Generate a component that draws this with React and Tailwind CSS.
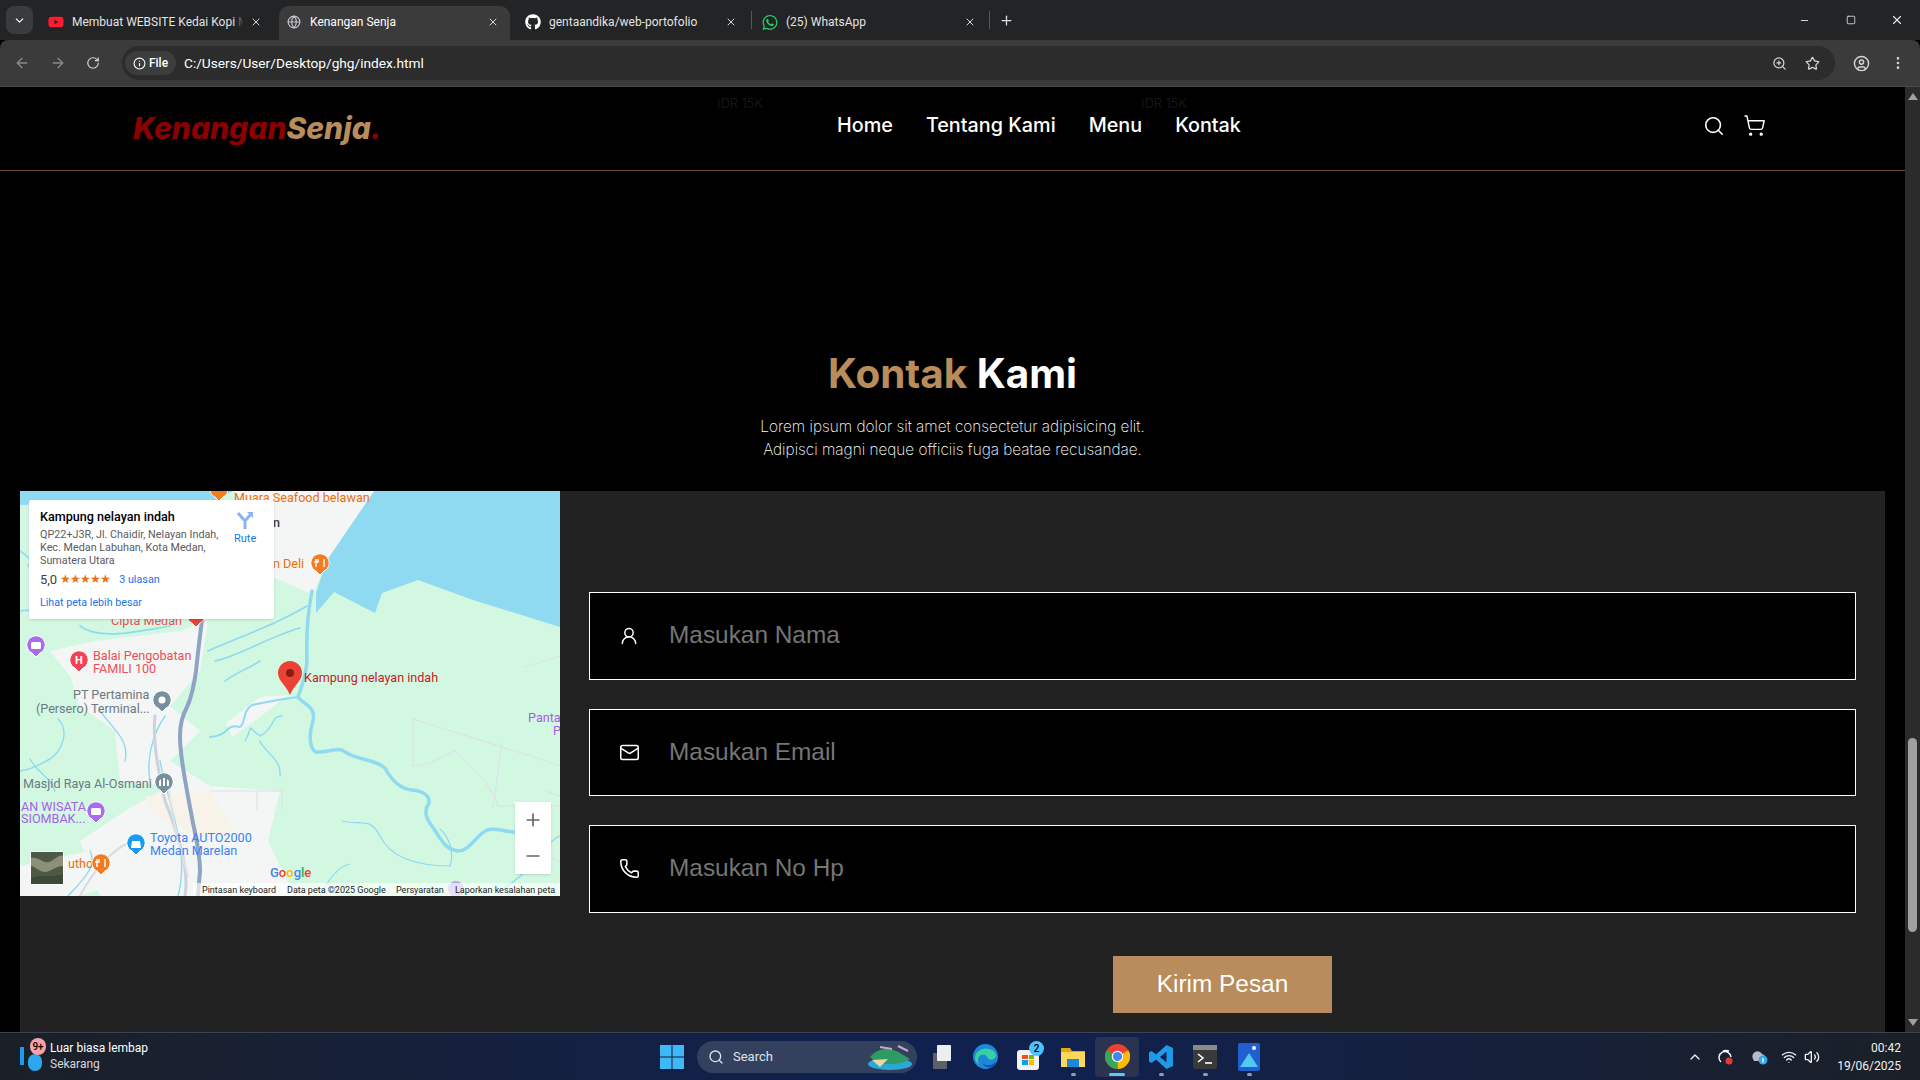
import { ChevronDown, X, ArrowLeft, ArrowRight, RotateCw, Info, ZoomIn, Star, CircleUser, EllipsisVertical, Plus, Minus, Search, ShoppingCart, UserRound, Mail, Phone, Globe, ChevronUp, Wifi, Volume2, Square } from 'lucide-react'
import { FaGithub, FaWhatsapp, FaYoutube } from 'react-icons/fa'

const ui = { fontFamily: 'Roboto, "Liberation Sans", sans-serif' }
const display = { fontFamily: 'Inter, "Liberation Sans", sans-serif' }
const arial = { fontFamily: '"Liberation Sans", sans-serif' }
const mapFont = 'Roboto, "Liberation Sans", sans-serif'

function Tab({ icon, title, width, active, padLeft, padRight }) {
  return (
    <div className={`flex items-center h-[34px] pb-[2px] shrink-0 gap-[8px] text-[12px] ${active ? 'bg-[#3b3b3b] rounded-t-[10px] text-white' : 'text-[#e3e3e3]'}`} style={{ width, paddingLeft: padLeft, paddingRight: padRight }}>
      <span className="w-4 h-4 flex items-center justify-center shrink-0">{icon}</span>
      <span className="flex-1 whitespace-nowrap overflow-hidden">{title}</span>
      <X size={12} className="text-[#d5d5d5] shrink-0" />
    </div>
  )
}

function BrowserChrome() {
  return (
    <div style={ui} className="shrink-0">
      <div className="h-[40px] bg-[#222425] flex items-end">
        <div className="flex items-center w-full h-[34px] pl-[6px]">
          <div className="w-[27px] h-[28px] rounded-lg bg-[#3a3b3c] flex items-center justify-center mb-[6px]">
            <ChevronDown size={13} className="text-white" />
          </div>
          <Tab width={246} padLeft={15} padRight={17} title={<>Membuat WEBSITE Kedai Kopi <span className="opacity-30">M</span></>} icon={<FaYoutube size={16} className="text-[#ff1a2f]" />} />
          <Tab width={231} padLeft={7} padRight={11} active title="Kenangan Senja" icon={<Globe size={14} className="text-[#c4c7cb]" />} />
          <Tab width={241} padLeft={15} padRight={14} title="gentaandika/web-portofolio" icon={<FaGithub size={16} className="text-white" />} />
          <div className="w-px h-[18px] bg-[#55585a] mb-[6px]" />
          <Tab width={237} padLeft={10} padRight={13} title="(25) WhatsApp" icon={<FaWhatsapp size={17} className="text-[#25d366]" />} />
          <div className="w-px h-[18px] bg-[#55585a] mb-[6px]" />
          <Plus size={15} className="text-[#e3e3e3] ml-[9px] mb-[6px]" />
          <div className="flex-1" />
          <div className="flex items-center mb-[6px] pr-[16px] text-[#e3e3e3]">
            <Minus size={11} />
            <Square size={10} className="ml-[36px]" />
            <X size={14} className="ml-[34px]" />
          </div>
        </div>
      </div>
      <div className="h-[47px] bg-[#3b3b3b] rounded-t-[8px] flex items-start pt-[6px] pl-[14px] border-b border-[#4a4a4a]">
        <div className="flex items-center h-[34px] gap-[20px] mr-[22px]">
          <ArrowLeft size={16} className="text-[#8a8a8a]" />
          <ArrowRight size={16} className="text-[#8a8a8a]" />
          <RotateCw size={14} className="text-[#d5d5d5]" />
        </div>
        <div className="w-[1713px] h-[34px] rounded-full bg-[#2c2c2c] flex items-center pl-[3px] pr-[15px]">
          <div className="h-[24px] w-[51px] rounded-full bg-[#3d3d3d] flex items-center justify-center gap-[3px] text-[12px] font-medium text-white">
            <Info size={13} />
            <span>File</span>
          </div>
          <span className="ml-[8px] text-[13.7px] text-white">C:/Users/User/Desktop/ghg/index.html</span>
          <div className="flex-1" />
          <ZoomIn size={15} className="text-[#d5d5d5] mr-[18px]" />
          <Star size={15} className="text-[#d5d5d5]" />
        </div>
        <div className="h-[34px] flex items-center gap-[20px] ml-[18px] text-[#d5d5d5]">
          <CircleUser size={17} />
          <EllipsisVertical size={16} />
        </div>
      </div>
    </div>
  )
}

function Marker({ x, y, color, children }) {
  return (
    <g>
      <path d={`M${x} ${y + 12} l-4 -4 a 9 9 0 1 1 8 0 z`} fill={color} stroke="#fff" strokeWidth="1" />
      <circle cx={x} cy={y} r="8.5" fill={color} />
      {children}
    </g>
  )
}

function MapCanvas() {
  const label = { fontFamily: mapFont, fontSize: 12.6 }
  return (
    <svg width="540" height="405" viewBox="0 0 540 405" className="block">
      <rect width="540" height="405" fill="#d3f8e2" />
      {/* sea */}
      <path d="M354 0 L540 0 L540 136 L453 109 L398 89 L362 102 L355 122 L314 101 L296 122 L296 102 L307 69 Z" fill="#8fdaf0" />
      <path d="M0 0 L213 0 L190 12 L60 12 L0 14 Z" fill="#8fdaf0" />
      {/* built up land */}
      <path d="M213 0 L354 0 L307 69 L293 104 L253 86 L240 60 L250 30 Z" fill="#f4f5f5" />
      <path d="M30 160 L75 150 L160 140 L188 130 L180 180 L150 215 L180 240 L150 270 L190 295 L260 300 L248 350 L270 395 L290 405 L80 405 L70 375 L60 350 L105 320 L150 295 L100 290 L95 240 L60 215 L50 185 Z" fill="#f4f5f5" />
      <path d="M125 305 L190 300 L215 340 L180 345 L135 325 Z" fill="#f8f3e8" />
      <path d="M0 375 L60 362 L120 345 L130 360 L90 395 L60 405 L0 405 Z" fill="#f4f5f5" />
      <path d="M268 204 L240 206 L206 232 L212 246 L240 226 Z" fill="#f4f5f5" />
      {/* channels */}
      <g fill="none" stroke="#8fdaf0" strokeLinejoin="round" strokeLinecap="round">
        <path d="M292 100 C288 120 286 145 287 170 C286 185 282 195 278 206 C285 215 296 215 293 230 C288 245 290 258 296 261 C310 262 318 255 325 261 C340 270 355 268 365 277 C372 290 380 298 392 299 C402 300 410 304 409 312 C402 322 408 330 414 338 C422 350 425 358 438 360 C450 360 455 345 467 339 C478 335 490 345 510 340" strokeWidth="3.5" />
        <path d="M278 206 C262 208 250 210 232 214 C222 220 226 232 220 236 C205 232 210 245 190 246" strokeWidth="2" />
        <path d="M280 137 C250 145 220 165 195 170 M287 115 C262 130 235 140 188 160 M205 190 C215 182 228 178 240 170" strokeWidth="1.6" />
        <path d="M0 60 C30 80 10 100 28 110 M15 20 C10 40 22 55 8 75 M0 120 C30 115 60 130 90 120 M60 135 C80 150 120 140 150 135" strokeWidth="1.6" />
        <path d="M38 228 C50 240 42 260 30 268 M10 268 C20 285 30 285 35 300 M0 280 C15 278 25 270 30 268 M80 220 C95 240 110 250 105 270 M130 290 C125 260 138 235 145 225 M140 270 C150 320 170 360 158 405" strokeWidth="1.4" />
        <path d="M322 330 C340 335 350 325 360 345 C370 365 395 375 430 375 C435 360 428 345 420 338 M300 405 C310 385 320 375 330 373" strokeWidth="1.2" />
        <path d="M240 245 C255 238 250 225 262 225 M240 245 C225 235 235 232 225 250 M240 250 C245 262 262 268 260 285" strokeWidth="1.4" />
        <path d="M70 360 C78 375 62 390 48 405" strokeWidth="1.4" />
        <path d="M480 400 C520 375 525 350 540 345" strokeWidth="1.5" />
      </g>
      {/* boundaries */}
      <g fill="none" stroke="#dcdfe8" strokeWidth="1">
        <path d="M393 228 C430 240 480 255 520 268 L540 275 M393 228 L393 275 L410 272 L435 260 C450 275 470 290 478 315 L540 315 M482 252 L473 317 M190 300 L262 300 L262 320 M237 300 L237 320" />
        <path d="M505 176 L540 165 M540 370 L525 365 M525 300 L540 305" />
      </g>
      {/* roads */}
      <g fill="none" strokeLinecap="round">
        <path d="M135 225 C132 250 140 290 145 310 C155 335 170 375 165 405" stroke="#ccd3dc" strokeWidth="3" />
        <path d="M148 290 C150 320 158 350 168 385" stroke="#dfe3e8" strokeWidth="2" />
        <path d="M108 352 C90 360 70 385 60 405" stroke="#d7dce2" strokeWidth="2" />
        <path d="M182 129 C180 145 178 160 176 180 C174 195 172 205 167 216 C162 225 160 235 160 245 C160 262 164 285 173 332 C177 350 180 366 180 380 L178 405" stroke="#8fa3c4" strokeWidth="4" />
      </g>
      <text x="214" y="11" {...label} fill="#e8710a">Muara Seafood belawan</text>
      <Marker x={199} y={-2} color="#f47b20" />
      <text x="253" y="36" {...label} fill="#3c4043" fontWeight="500">n</text>
      <text x="253" y="77" {...label} fill="#e8710a">n Deli</text>
      <Marker x={300} y={72} color="#f47b20">
        <path d="M296 68 v8 M304 68 v8 M298 68 v3 h-4" stroke="#fff" strokeWidth="1.4" fill="none" />
      </Marker>
      <text x="91" y="134" {...label} fill="#e8505b">Cipta Medan</text>
      <Marker x={176} y={124} color="#ea4335" />
      <Marker x={16} y={154} color="#a96cf0">
        <rect x="11" y="151" width="10" height="7" rx="1.5" fill="#fff" />
      </Marker>
      <Marker x={59} y={169} color="#ef4358">
        <text x="59" y="173" textAnchor="middle" fontFamily={mapFont} fontSize="11" fontWeight="700" fill="#fff">H</text>
      </Marker>
      <text x="73" y="169" {...label} fill="#e8505b">Balai Pengobatan</text>
      <text x="73" y="182" {...label} fill="#e8505b">FAMILI 100</text>
      <path d="M270 204 C266 194 258 190 258 182 A12 12 0 1 1 282 182 C282 190 274 194 270 204 Z" fill="#ea4335" />
      <circle cx="270" cy="182" r="4" fill="#8a1a12" />
      <text x="284" y="191" {...label} fill="#c5221f">Kampung nelayan indah</text>
      <text x="53" y="208" {...label} fill="#6c7a80">PT Pertamina</text>
      <text x="16" y="222" {...label} fill="#6c7a80">(Persero) Terminal...</text>
      <Marker x={142} y={209} color="#78909c">
        <circle cx="142" cy="209" r="3.5" fill="#fff" />
      </Marker>
      <text x="508" y="231" {...label} fill="#a55fe8">Panta</text>
      <text x="533" y="244" {...label} fill="#a55fe8">P</text>
      <text x="3" y="297" {...label} fill="#6c7a80">Masjid Raya Al-Osmani</text>
      <Marker x={144} y={291} color="#78909c">
        <path d="M139 295 v-5 l2 -2 v7 M143 295 v-8 h2 v8 M147 295 v-7 l2 2 v5" fill="#fff" />
      </Marker>
      <text x="1" y="320" {...label} fill="#a55fe8">AN WISATA</text>
      <text x="1" y="332" {...label} fill="#a55fe8">SIOMBAK...</text>
      <Marker x={76} y={320} color="#a96cf0">
        <rect x="71" y="317" width="10" height="7" rx="1.5" fill="#fff" />
      </Marker>
      <Marker x={116} y={352} color="#1a9bf0">
        <path d="M112 350 h8 l1 7 h-10 z" fill="#fff" />
      </Marker>
      <text x="130" y="351" {...label} fill="#3b82f6">Toyota AUTO2000</text>
      <text x="130" y="364" {...label} fill="#3b82f6">Medan Marelan</text>
      <text x="48" y="377" {...label} fill="#e8710a">utho</text>
      <Marker x={81} y={372} color="#f47b20">
        <path d="M77 368 v8 M85 368 v8 M79 368 v3 h-4" stroke="#fff" strokeWidth="1.4" fill="none" />
      </Marker>
      {/* google wordmark */}
      <text x="250" y="386" fontFamily={mapFont} fontSize="13" fontWeight="500">
        <tspan fill="#4285f4">G</tspan><tspan fill="#ea4335">o</tspan><tspan fill="#fbbc05">o</tspan><tspan fill="#4285f4">g</tspan><tspan fill="#34a853">l</tspan><tspan fill="#ea4335">e</tspan>
      </text>
      <circle cx="436" cy="398" r="8" fill="#a96cf0" opacity="0.6" />
      <rect x="173" y="392" width="367" height="13" fill="#fff" fillOpacity="0.65" />
      <g fontFamily={mapFont} fontSize="9" fill="#222">
        <text x="182" y="402">Pintasan keyboard</text>
        <text x="267" y="402">Data peta ©2025 Google</text>
        <text x="376" y="402">Persyaratan</text>
        <text x="435" y="402">Laporkan kesalahan peta</text>
      </g>
    </svg>
  )
}

function MapPanel() {
  return (
    <div className="relative w-[540px] h-[405px] shrink-0 overflow-hidden" style={ui}>
      <MapCanvas />
      <div className="absolute left-[9px] top-[9px] w-[245px] h-[119px] bg-white rounded-[2px] shadow pl-[11px] pt-[9px] flex">
        <div className="w-[186px] shrink-0">
          <div className="text-[12.6px] font-medium leading-[15px] text-black">Kampung nelayan indah</div>
          <div className="text-[10.8px] leading-[13px] text-[#5b5b5b] mt-[4px] whitespace-nowrap">
            QP22+J3R, Jl. Chaidir, Nelayan Indah,<br />Kec. Medan Labuhan, Kota Medan,<br />Sumatera Utara
          </div>
          <div className="flex items-center mt-[5px] h-[16px]">
            <span className="text-[13px] text-[#3c4043]">5,0</span>
            <span className="text-[11.5px] tracking-[-1px] text-[#e7711b] ml-[3px]">★★★★★</span>
            <span className="text-[10.8px] text-[#1a73e8] ml-[9px]">3 ulasan</span>
          </div>
          <div className="text-[10.7px] text-[#1a73e8] mt-[8px] leading-[13px]">Lihat peta lebih besar</div>
        </div>
        <div className="flex flex-col items-center ml-[8px] mt-[2px]">
          <svg width="18" height="18" viewBox="0 0 18 18">
            <path d="M9 18 V10 L2 2 M9 10 L15 3" fill="none" stroke="#8ab4f0" strokeWidth="3" />
            <path d="M11 1 H17 V7 Z" fill="#8ab4f0" />
          </svg>
          <span className="text-[11px] text-[#1a73e8] mt-[2px]">Rute</span>
        </div>
      </div>
      <div className="absolute left-[10px] top-[360px] w-[34px] h-[34px] rounded-[2px] border border-white overflow-hidden bg-[#5f6b52]">
        <svg width="32" height="32" viewBox="0 0 32 32">
          <rect width="32" height="32" fill="#4c5a45" />
          <path d="M0 6 C8 4 12 12 18 10 C24 8 28 2 32 4 L32 14 C24 14 20 20 14 20 C8 20 4 14 0 14 Z" fill="#8d8f78" />
          <path d="M0 26 C10 22 20 26 32 22 L32 32 L0 32 Z" fill="#3d4a38" />
        </svg>
      </div>
      <div className="absolute left-[495px] top-[311px] w-[36px] h-[72px] bg-white shadow flex flex-col items-center justify-around text-[#666]">
        <Plus size={20} strokeWidth={2} />
        <Minus size={20} strokeWidth={2} />
      </div>
    </div>
  )
}

function Field({ icon, placeholder }) {
  return (
    <div className="flex items-center h-[87.5px] border border-white bg-black">
      <span className="w-[79px] pl-[29px] shrink-0 text-white">{icon}</span>
      <input placeholder={placeholder} className="flex-1 bg-transparent outline-none text-[24.4px] text-white placeholder:text-[#757575]" style={arial} />
    </div>
  )
}

function Page() {
  const links = ['Home', 'Tentang Kami', 'Menu', 'Kontak']
  return (
    <main className="flex-1 bg-black overflow-hidden relative" style={display}>
      <span className="absolute left-[717px] top-[7px] text-[13px] font-light text-[#1a1a1a]">IDR 15K</span>
      <span className="absolute left-[1141px] top-[7px] text-[13px] font-light text-[#1a1a1a]">IDR 15K</span>
      <header className="h-[84px] border-b border-[#6b4f32] flex items-start pl-[133px] pr-[139px]">
        <div className="text-[30px] font-extrabold italic mt-[21px] leading-[40px] w-[704px] shrink-0">
          <span className="text-[#8b0000]">Kenangan</span><span className="text-[#b88c5b]">Senja</span><span className="text-[#8b0000]">.</span>
        </div>
        <nav className="flex gap-[33px] mt-[24px] text-[19.8px] font-medium leading-[28px] text-white">
          {links.map((l) => <a key={l}>{l}</a>)}
        </nav>
        <div className="flex-1" />
        <div className="flex items-center gap-[18px] mt-[27px] text-white">
          <Search size={22} strokeWidth={1.75} />
          <ShoppingCart size={23} strokeWidth={1.5} />
        </div>
      </header>
      <section className="pt-[179px] text-center">
        <h2 className="text-[40.4px] font-bold leading-[48px] text-white"><span className="text-[#b88c5b]">Kontak</span> Kami</h2>
        <p className="mt-[17px] text-[15.35px] font-extralight leading-[23px] text-white">
          Lorem ipsum dolor sit amet consectetur adipisicing elit.<br />Adipisci magni neque officiis fuga beatae recusandae.
        </p>
      </section>
      <section className="mt-[30px] ml-[20px] mr-[20px] h-[541px] bg-[#222222] flex items-start">
        <MapPanel />
        <form className="flex-1 mx-[29px] pt-[101px] flex flex-col gap-[29px]">
          <Field icon={<UserRound size={20} strokeWidth={1.75} />} placeholder="Masukan Nama" />
          <Field icon={<Mail size={21} strokeWidth={1.75} />} placeholder="Masukan Email" />
          <Field icon={<Phone size={21} strokeWidth={1.75} />} placeholder="Masukan No Hp" />
          <button type="button" className="self-center mt-[14px] w-[219px] h-[57px] bg-[#b88c5b] text-white text-[24.4px]" style={arial}>Kirim Pesan</button>
        </form>
      </section>
    </main>
  )
}

function Scrollbar() {
  return (
    <div className="w-[15px] shrink-0 bg-[#2b2b2b] flex flex-col items-center text-[#a0a0a0]">
      <span className="mt-[6px] w-0 h-0 border-x-[5px] border-x-transparent border-b-[7px] border-b-[#a0a0a0]" />
      <div className="mt-[638px] w-[9px] h-[194px] rounded-full bg-[#a0a0a0]" />
      <div className="flex-1" />
      <span className="mb-[6px] w-0 h-0 border-x-[5px] border-x-transparent border-t-[7px] border-t-[#a0a0a0]" />
    </div>
  )
}

function TaskIcon({ children, active, dot }) {
  return (
    <div className={`relative w-[44px] h-[40px] flex items-center justify-center rounded ${active ? 'bg-[#2a3350]' : ''}`}>
      {children}
      {dot && <span className={`absolute bottom-[1px] h-[3px] rounded-full ${active ? 'w-4 bg-[#5cc8ff]' : 'w-[5px] bg-[#9aa0a6]'}`} />}
    </div>
  )
}

function Taskbar() {
  return (
    <div className="h-[48px] shrink-0 border-t border-[#3c4250] flex items-center relative text-white bg-[linear-gradient(90deg,#1b2027_0%,#10214f_45%,#10214f_55%,#1b2027_100%)]" style={ui}>
      <div className="absolute left-[20px] top-[5px] flex items-center">
        <div className="relative w-[26px] h-[36px]">
          <span className="absolute left-0 top-[9px] w-[4px] h-[18px] bg-[#1e9bf0]" />
          <span className="absolute left-[8px] top-[16px] w-[14px] h-[17px] rounded-full bg-[#2ba7f0]" />
          <span className="absolute left-[10px] top-[0px] w-[16px] h-[17px] rounded-full bg-[#f7a1a8] text-black text-[10px] font-medium flex items-center justify-center">9+</span>
        </div>
        <div className="ml-[4px] text-[12px] leading-[16px]">
          <div>Luar biasa lembap</div>
          <div className="text-[#d5d7db]">Sekarang</div>
        </div>
      </div>

      <div className="ml-[660px] flex items-center">
        <svg width="24" height="24" viewBox="0 0 24 24" className="mr-[13px]">
          <path d="M0 0 H11.5 V11.5 H0 Z M12.5 0 H24 V11.5 H12.5 Z M0 12.5 H11.5 V24 H0 Z M12.5 12.5 H24 V24 H12.5 Z" fill="#3fb8f5" />
        </svg>
        <div className="w-[220px] h-[32px] rounded-full bg-[#33415f] flex items-center pl-[11px] pr-[1px] text-[13px] text-[#dfe3ea]">
          <Search size={16} />
          <span className="ml-[9px]">Search</span>
          <div className="flex-1" />
          <svg width="52" height="28" viewBox="0 0 52 28">
            <ellipse cx="26" cy="21" rx="22" ry="6" fill="#2ba7d8" />
            <path d="M6 14 C14 4 26 4 36 10 L46 16 C36 22 16 24 6 14 Z" fill="#2f9a63" />
            <path d="M8 17 L24 16 L16 24 Z" fill="#e8d9a0" />
            <path d="M16 4 L28 6 M34 3 L44 8" stroke="#c9a9c8" strokeWidth="2" />
          </svg>
        </div>
        <div className="ml-[16px] relative w-[18px] h-[24px]">
          <span className="absolute left-0 bottom-0 w-[14px] h-[16px] bg-[#5d6067] rounded-[1px]" />
          <span className="absolute right-0 top-0 w-[14px] h-[16px] bg-[#eceef0] rounded-[1px]" />
        </div>
        <div className="ml-[12px] flex">
          <TaskIcon>
            <svg width="25" height="25" viewBox="0 0 24 24">
              <circle cx="12" cy="12" r="12" fill="#1e88d8" />
              <path d="M2 12 C4 4 14 2 20 7 C24 11 22 15 17 15 C13 15 15 11 10 10 C6 10 3 14 6 20 C3 18 1.5 15 2 12 Z" fill="#39d1a0" />
              <path d="M8 17 C10 21 17 22 22 17 C20 23 12 25 8 17 Z" fill="#0f4fa8" />
            </svg>
          </TaskIcon>
          <TaskIcon>
            <div className="relative w-[24px] h-[26px]">
              <span className="absolute left-0 bottom-0 w-[22px] h-[20px] bg-[#f2f2f2] rounded-[3px] grid grid-cols-2 gap-[1px] p-[5px]">
                <i className="bg-[#f25022]" /><i className="bg-[#7fba00]" /><i className="bg-[#00a4ef]" /><i className="bg-[#ffb900]" />
              </span>
              <span className="absolute -right-[3px] -top-[3px] w-[15px] h-[15px] rounded-full bg-[#4cc2ff] text-black text-[10px] font-medium flex items-center justify-center">2</span>
            </div>
          </TaskIcon>
          <TaskIcon dot>
            <svg width="24" height="24" viewBox="0 0 24 24">
              <path d="M0 3 H9 L11 6 H24 V22 H0 Z" fill="#e8a80c" />
              <path d="M0 7 H24 V22 H0 Z" fill="#fbd75b" />
              <rect x="6" y="14" width="12" height="8" fill="#1e88d8" />
            </svg>
          </TaskIcon>
          <TaskIcon active dot>
            <svg width="25" height="25" viewBox="0 0 24 24">
              <circle cx="12" cy="12" r="12" fill="#ea4335" />
              <path d="M12 12 L22.4 6 A12 12 0 0 1 12 24 Z" fill="#fbbc05" />
              <path d="M12 12 L12 24 A12 12 0 0 1 1.6 6 Z" fill="#34a853" />
              <circle cx="12" cy="12" r="5.5" fill="#fff" />
              <circle cx="12" cy="12" r="4.4" fill="#4285f4" />
            </svg>
          </TaskIcon>
          <TaskIcon dot>
            <svg width="24" height="24" viewBox="0 0 24 24">
              <path d="M17.5 0 L24 3 V21 L17.5 24 L7 14.5 L2.5 18 L0 16.5 V7.5 L2.5 6 L7 9.5 Z M17.5 6.5 L11 12 L17.5 17.5 Z" fill="#1f9ae8" />
            </svg>
          </TaskIcon>
          <TaskIcon dot>
            <svg width="24" height="24" viewBox="0 0 24 24">
              <rect width="24" height="24" rx="2" fill="#3a3a3a" />
              <rect width="24" height="5" fill="#8a8a8a" />
              <path d="M5 9 L10 13 L5 17" fill="none" stroke="#fff" strokeWidth="1.6" />
              <path d="M12 18 H19" stroke="#fff" strokeWidth="1.6" />
            </svg>
          </TaskIcon>
          <TaskIcon dot>
            <svg width="22" height="28" viewBox="0 0 22 28">
              <rect width="22" height="28" rx="2" fill="#1f5fd0" />
              <path d="M2 24 L11 10 L20 24 Z" fill="#52c8f5" />
              <circle cx="16" cy="5" r="2" fill="#fff" />
            </svg>
          </TaskIcon>
        </div>
      </div>

      <div className="absolute right-[19px] top-0 h-full flex items-center text-[#f0f0f0]">
        <ChevronUp size={16} className="mr-[15px]" />
        <svg width="16" height="18" viewBox="0 0 16 18" className="mr-[16px]">
          <path d="M3 14 A6 6 0 1 1 13 9 M5 3 A5 2 0 0 1 11 3" fill="none" stroke="#fff" strokeWidth="1.4" />
          <circle cx="11" cy="13" r="3.5" fill="#e53935" />
        </svg>
        <svg width="18" height="18" viewBox="0 0 18 18" className="mr-[13px]">
          <path d="M3 11 A5 5 0 0 1 12 6 A4 4 0 0 1 14 13 H4 Z" fill="#b8bcc2" />
          <circle cx="13" cy="12" r="4.5" fill="#35a7ee" />
          <rect x="12.3" y="10" width="1.4" height="4.5" fill="#fff" />
        </svg>
        <Wifi size={16} className="mr-[7px]" />
        <Volume2 size={16} className="mr-[17px]" />
        <div className="text-[12px] leading-[18px] text-right">
          <div>00:42</div>
          <div>19/06/2025</div>
        </div>
      </div>
    </div>
  )
}

export default function App() {
  return (
    <div className="w-[1920px] h-[1080px] overflow-hidden flex flex-col bg-black">
      <BrowserChrome />
      <div className="flex-1 flex min-h-0">
        <Page />
        <Scrollbar />
      </div>
      <Taskbar />
    </div>
  )
}
